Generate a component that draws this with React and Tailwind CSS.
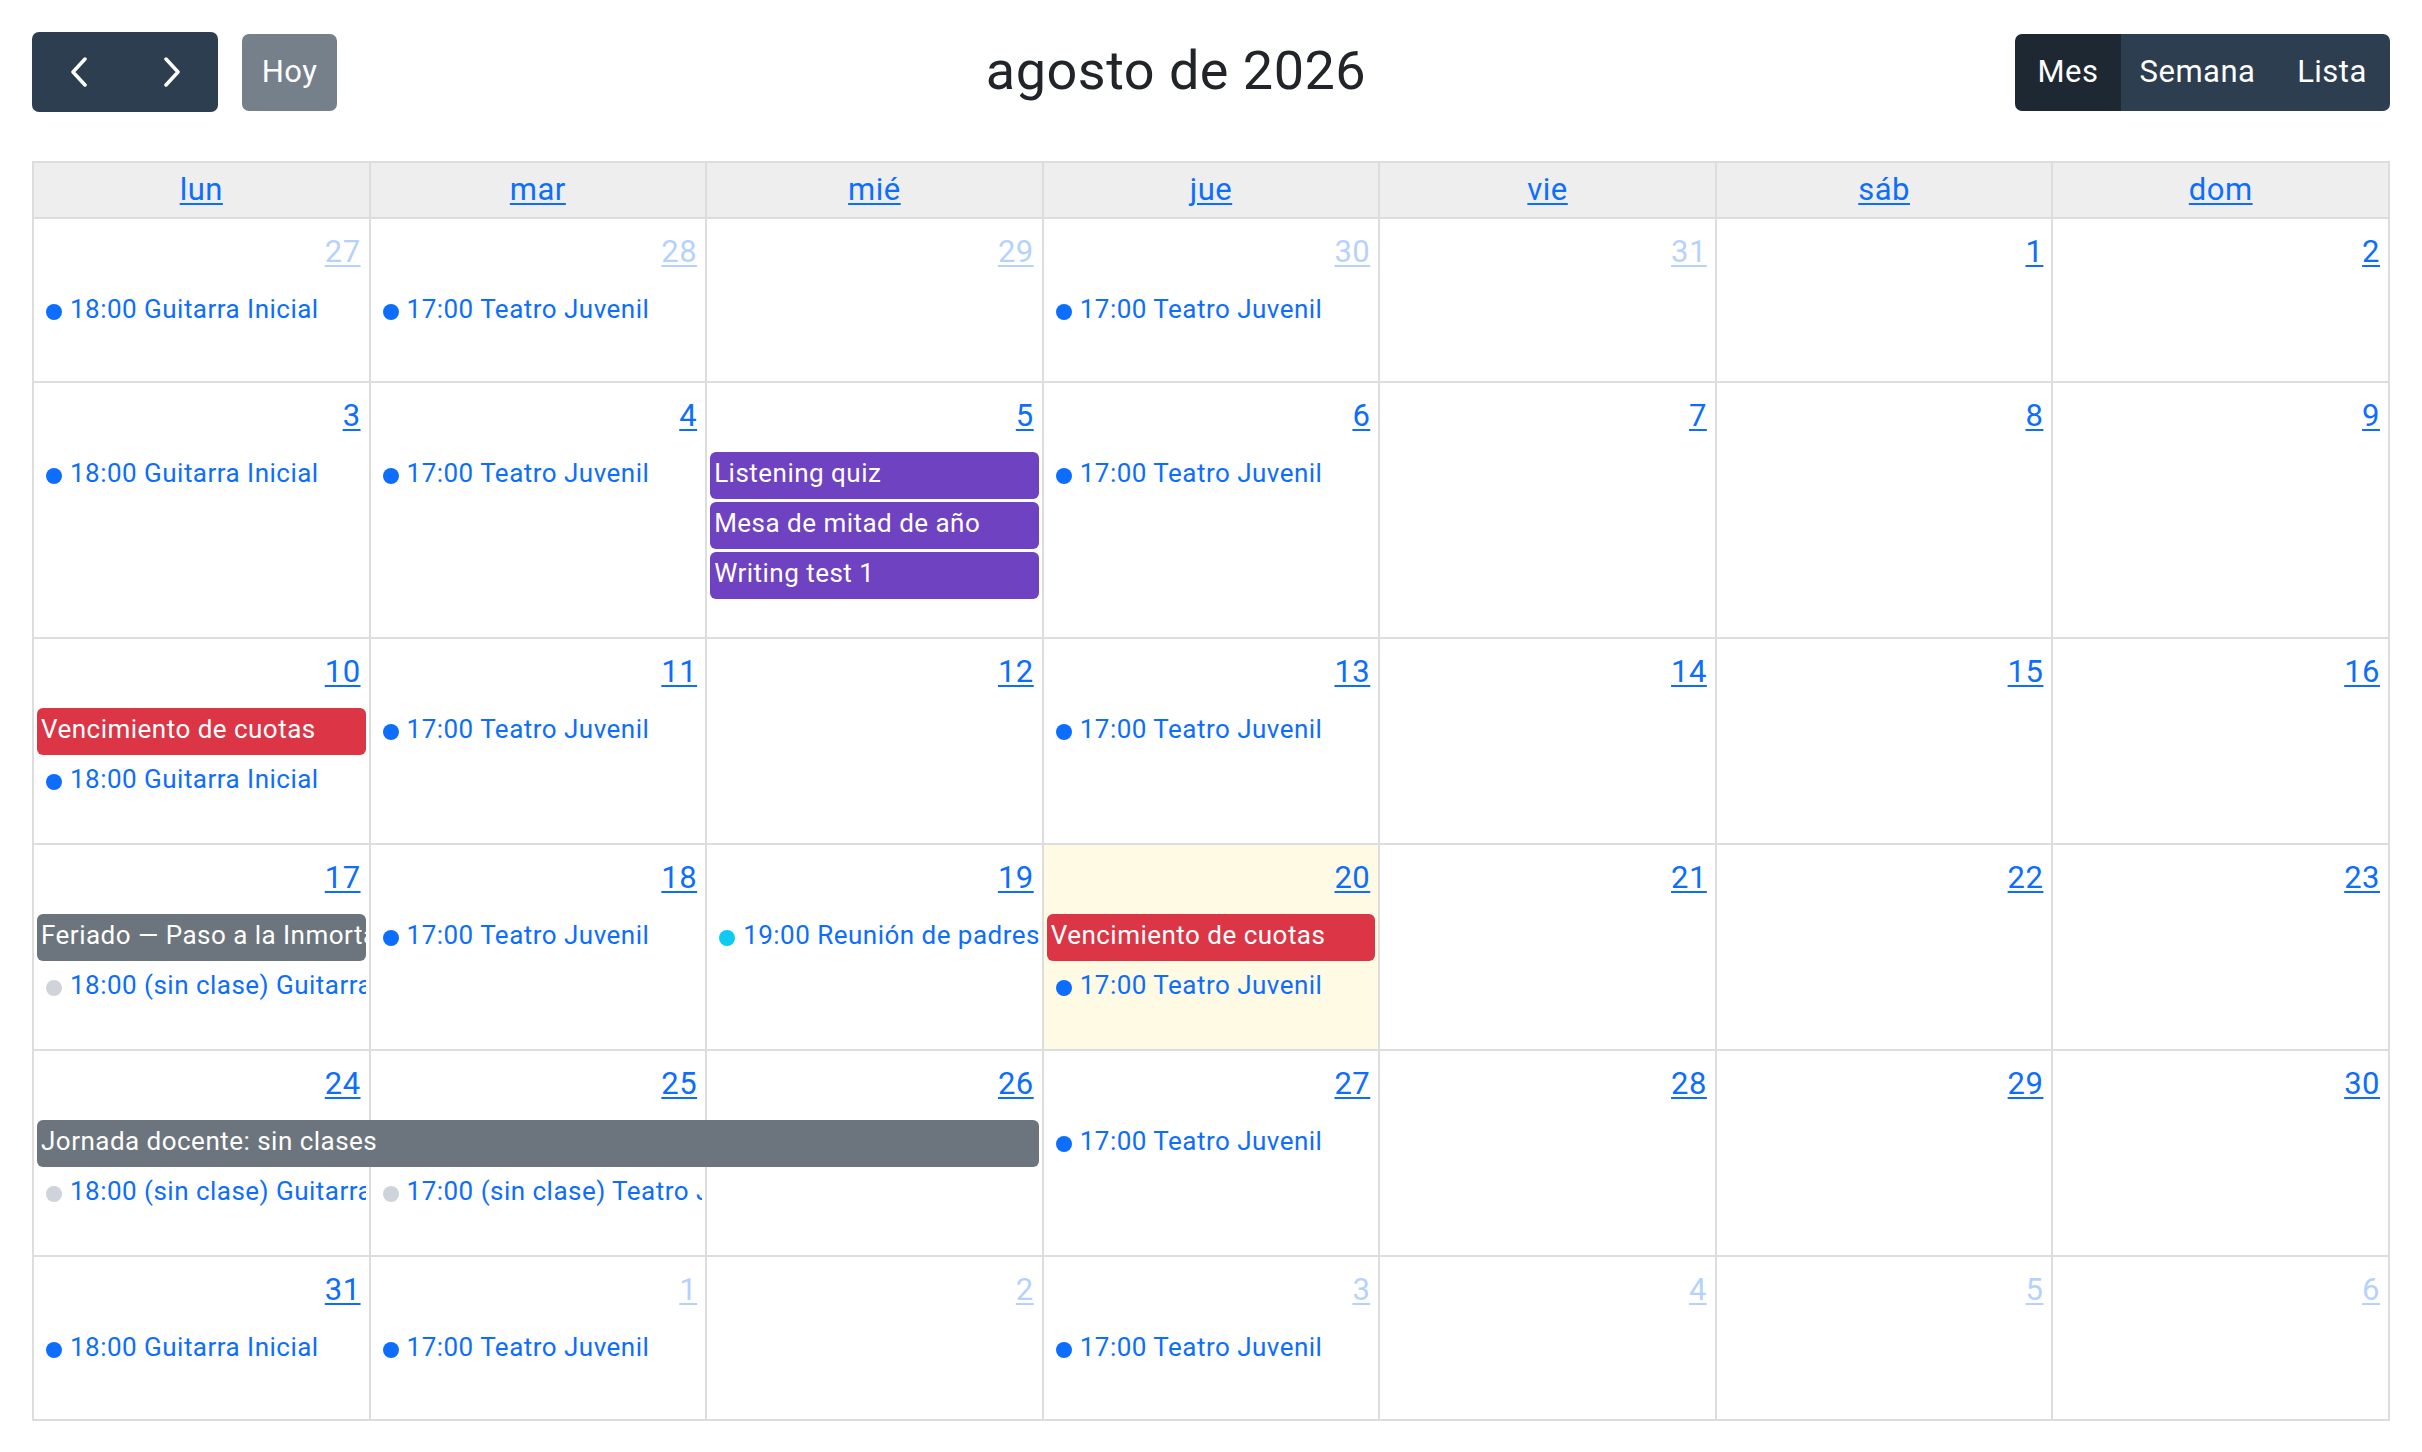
import React from 'react';

const colStart = {
  1: 'col-start-1',
  2: 'col-start-2',
  3: 'col-start-3',
  4: 'col-start-4',
  5: 'col-start-5',
  6: 'col-start-6',
  7: 'col-start-7',
};
const rowStart = { 2: 'row-start-2', 3: 'row-start-3', 4: 'row-start-4' };
const colSpan = { 1: 'col-span-1', 3: 'col-span-3' };

const dotColors = {
  blue: 'bg-[#0d6efd]',
  gray: 'bg-[#ced4da]',
  cyan: 'bg-[#0dcaf0]',
};
const blockColors = {
  purple: 'bg-[#6f42c1]',
  red: 'bg-[#dc3545]',
  gray: 'bg-[#6c757d]',
};

const dayNames = ['lun', 'mar', 'mié', 'jue', 'vie', 'sáb', 'dom'];

const guitarra = { kind: 'dot', color: 'blue', text: '18:00 Guitarra Inicial' };
const teatro = { kind: 'dot', color: 'blue', text: '17:00 Teatro Juvenil' };

const weeks = [
  {
    days: [[27, true], [28, true], [29, true], [30, true], [31, true], [1, false], [2, false]],
    events: [
      { col: 1, row: 2, ...guitarra },
      { col: 2, row: 2, ...teatro },
      { col: 4, row: 2, ...teatro },
    ],
  },
  {
    days: [[3], [4], [5], [6], [7], [8], [9]],
    events: [
      { col: 1, row: 2, ...guitarra },
      { col: 2, row: 2, ...teatro },
      { col: 3, row: 2, kind: 'block', color: 'purple', text: 'Listening quiz' },
      { col: 3, row: 3, kind: 'block', color: 'purple', text: 'Mesa de mitad de año' },
      { col: 3, row: 4, kind: 'block', color: 'purple', text: 'Writing test 1' },
      { col: 4, row: 2, ...teatro },
    ],
  },
  {
    days: [[10], [11], [12], [13], [14], [15], [16]],
    events: [
      { col: 1, row: 2, kind: 'block', color: 'red', text: 'Vencimiento de cuotas' },
      { col: 1, row: 3, ...guitarra },
      { col: 2, row: 2, ...teatro },
      { col: 4, row: 2, ...teatro },
    ],
  },
  {
    days: [[17], [18], [19], [20], [21], [22], [23]],
    today: 4,
    events: [
      {
        col: 1,
        row: 2,
        kind: 'block',
        color: 'gray',
        text: 'Feriado — Paso a la Inmortalidad del General San Martín',
      },
      { col: 1, row: 3, kind: 'dot', color: 'gray', text: '18:00 (sin clase) Guitarra Inicial' },
      { col: 2, row: 2, ...teatro },
      { col: 3, row: 2, kind: 'dot', color: 'cyan', text: '19:00 Reunión de padres' },
      { col: 4, row: 2, kind: 'block', color: 'red', text: 'Vencimiento de cuotas' },
      { col: 4, row: 3, ...teatro },
    ],
  },
  {
    days: [[24], [25], [26], [27], [28], [29], [30]],
    events: [
      { col: 1, row: 2, span: 3, kind: 'block', color: 'gray', text: 'Jornada docente: sin clases' },
      { col: 1, row: 3, kind: 'dot', color: 'gray', text: '18:00 (sin clase) Guitarra Inicial' },
      { col: 2, row: 3, kind: 'dot', color: 'gray', text: '17:00 (sin clase) Teatro Juvenil' },
      { col: 4, row: 2, ...teatro },
    ],
  },
  {
    days: [[31], [1, true], [2, true], [3, true], [4, true], [5, true], [6, true]],
    events: [
      { col: 1, row: 2, ...guitarra },
      { col: 2, row: 2, ...teatro },
      { col: 4, row: 2, ...teatro },
    ],
  },
];

function Chevron({ dir }) {
  const points = dir === 'left' ? '15,2 3,15 15,28' : '3,2 15,15 3,28';
  return (
    <svg width="18" height="30" viewBox="0 0 18 30" fill="none">
      <polyline
        points={points}
        stroke="white"
        strokeWidth="3.5"
        strokeLinecap="round"
        strokeLinejoin="round"
      />
    </svg>
  );
}

function CalEvent({ ev }) {
  const place = `${colStart[ev.col]} ${rowStart[ev.row]} ${colSpan[ev.span || 1]}`;

  if (ev.kind === 'block') {
    return (
      <div className={`${place} pt-[3px] min-w-0`}>
        <div
          className={`h-[47px] ml-[3px] mr-[5px] rounded-[6px] px-[4px] overflow-hidden whitespace-nowrap text-white text-[26px] leading-[42px] ${blockColors[ev.color]}`}
        >
          {ev.text}
        </div>
      </div>
    );
  }

  return (
    <div className={`${place} pt-[3px] min-w-0`}>
      <div className="h-[47px] ml-[3px] mr-[5px] flex items-start overflow-hidden whitespace-nowrap">
        <span className={`w-[16px] h-[16px] rounded-full shrink-0 mt-[16px] ml-[9px] ${dotColors[ev.color]}`} />
        <span className="ml-[8px] text-[26px] leading-[42px] text-[#0d6efd]">{ev.text}</span>
      </div>
    </div>
  );
}

function Week({ week }) {
  return (
    <div className="grid grid-cols-7 grid-rows-[66px_auto_auto_auto_minmax(40px,1fr)] min-h-[164px]">
      {/* cell backgrounds */}
      {week.days.map((d, i) => (
        <div
          key={`bg${i}`}
          className={`${colStart[i + 1]} row-span-full border-r-2 border-b-2 border-[#dddddd] ${
            week.today === i + 1 ? 'bg-[#fffae3]' : 'bg-white'
          }`}
        />
      ))}

      {/* day numbers */}
      {week.days.map(([num, other], i) => (
        <div key={`n${i}`} className={`${colStart[i + 1]} row-start-1 flex justify-end pr-[10px] pt-[10px]`}>
          <a
            href="#"
            className={`text-[31px] leading-[46px] text-[#0d6efd] underline decoration-[2px] underline-offset-[3px] ${
              other ? 'opacity-30' : ''
            }`}
          >
            {num}
          </a>
        </div>
      ))}

      {week.events.map((ev, i) => (
        <CalEvent key={`e${i}`} ev={ev} />
      ))}
    </div>
  );
}

export default function App() {
  return (
    <div className="min-h-screen bg-white px-[32px] pt-[32px] pb-[34px] font-[family-name:Roboto,sans-serif] tracking-[0.03em] text-[#212529]">
      {/* Toolbar */}
      <div className="flex items-center justify-between h-[80px] mb-[49px]">
        <div className="flex items-center gap-[24px]">
          <div className="flex h-[80px] rounded-[7px] overflow-hidden bg-[#2c3e50]">
            <button className="w-[93px] h-full flex items-center justify-center">
              <Chevron dir="left" />
            </button>
            <button className="w-[93px] h-full flex items-center justify-center">
              <Chevron dir="right" />
            </button>
          </div>
          <button className="w-[95px] h-[77px] rounded-[7px] bg-[#76808b] text-white text-[31px] leading-[46px]">
            Hoy
          </button>
        </div>

        <h2 className="text-[54px] leading-[80px] font-normal -mt-[3px]">agosto de 2026</h2>

        <div className="flex h-[77px] rounded-[7px] overflow-hidden text-white text-[31px] leading-[46px]">
          <button className="w-[106px] bg-[#1e2833]">Mes</button>
          <button className="w-[153px] bg-[#2c3e50]">Semana</button>
          <button className="w-[116px] bg-[#2c3e50]">Lista</button>
        </div>
      </div>

      {/* Grid */}
      <div className="border-t-2 border-l-2 border-[#dddddd]">
        <div className="grid grid-cols-7">
          {dayNames.map((n) => (
            <div
              key={n}
              className="h-[56px] flex items-center justify-center bg-[#eeeeee] border-r-2 border-b-2 border-[#dddddd]"
            >
              <a href="#" className="text-[31px] leading-[46px] text-[#0d6efd] underline decoration-[2px] underline-offset-[3px]">
                {n}
              </a>
            </div>
          ))}
        </div>
        {weeks.map((w, i) => (
          <Week key={i} week={w} />
        ))}
      </div>
    </div>
  );
}
